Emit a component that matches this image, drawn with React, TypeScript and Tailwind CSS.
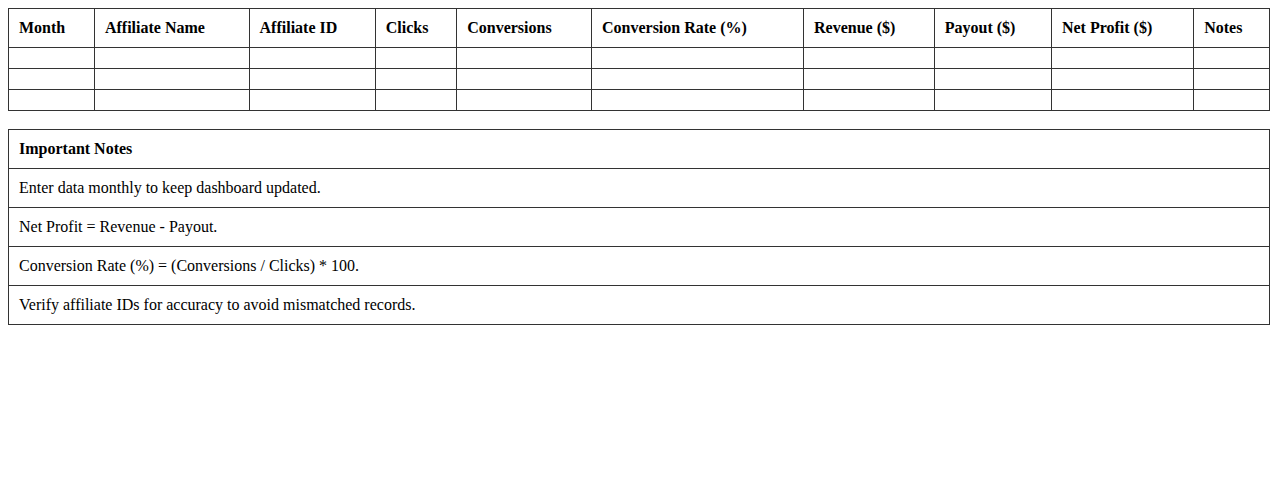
const headers = [
  'Month',
  'Affiliate Name',
  'Affiliate ID',
  'Clicks',
  'Conversions',
  'Conversion Rate (%)',
  'Revenue ($)',
  'Payout ($)',
  'Net Profit ($)',
  'Notes',
];

const notes = [
  'Enter data monthly to keep dashboard updated.',
  'Net Profit = Revenue - Payout.',
  'Conversion Rate (%) = (Conversions / Clicks) * 100.',
  'Verify affiliate IDs for accuracy to avoid mismatched records.',
];

export default function App() {
  return (
    <div className="m-2 bg-white text-base leading-[18px] text-black font-['Liberation_Serif','Times_New_Roman',serif]">
      <table className="w-full border-collapse">
        <thead>
          <tr>
            {headers.map((h) => (
              <th key={h} className="border border-[#333] p-[10px] text-left font-bold">
                {h}
              </th>
            ))}
          </tr>
        </thead>
        <tbody>
          {[0, 1, 2].map((r) => (
            <tr key={r}>
              {headers.map((h) => (
                <td key={h} className="border border-[#333] p-[10px]"></td>
              ))}
            </tr>
          ))}
        </tbody>
      </table>

      <table className="mt-[18px] w-full border-collapse">
        <thead>
          <tr>
            <th className="border border-[#333] p-[10px] text-left font-bold">Important Notes</th>
          </tr>
        </thead>
        <tbody>
          {notes.map((n) => (
            <tr key={n}>
              <td className="border border-[#333] p-[10px]">{n}</td>
            </tr>
          ))}
        </tbody>
      </table>
    </div>
  );
}
